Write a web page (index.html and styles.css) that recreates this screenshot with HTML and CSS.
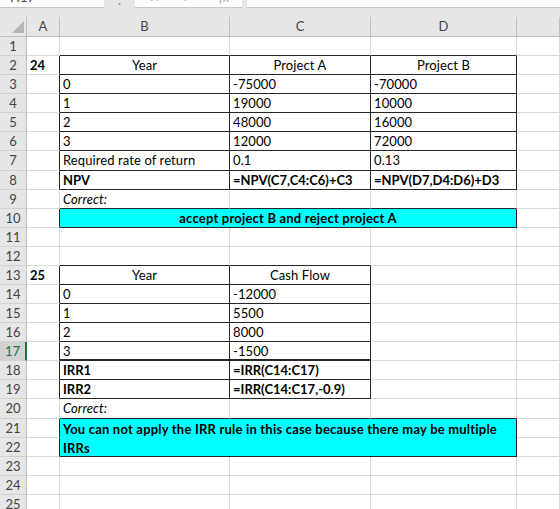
FILE: index.html
```html
<!DOCTYPE html>
<html>
<head>
<meta charset="utf-8">
<link rel="stylesheet" href="styles.css">
</head>
<body>
<div class="topbar">
  <div class="box namebox"><span class="peek">H17</span></div>
  <div class="ddgap"><span class="peek dots">⋮</span></div>
  <div class="box iconbox"><span class="peek ic x1">✕</span><span class="peek ic x2">✓</span><span class="peek ic fxi">fx</span></div>
  <div class="box formula"></div>
</div>
<div class="sheet">
  <div class="hd corner"><svg width="12" height="12" viewBox="0 0 12 12"><polygon points="12,0 12,12 0,12" fill="#b7b7b7"/></svg></div>
  <div class="hd">A</div><div class="hd">B</div><div class="hd">C</div><div class="hd">D</div><div class="hd"></div>

  <div class="rh">1</div><div class="c"></div><div class="c db"></div><div class="c db"></div><div class="c db"></div><div class="c"></div>
  <div class="rh">2</div><div class="c dr b">24</div><div class="c dr db ctr">Year</div><div class="c dr db ctr">Project A</div><div class="c dr db ctr">Project B</div><div class="c"></div>
  <div class="rh">3</div><div class="c dr"></div><div class="c dr db">0</div><div class="c dr db">-75000</div><div class="c dr db">-70000</div><div class="c"></div>
  <div class="rh">4</div><div class="c dr"></div><div class="c dr db">1</div><div class="c dr db">19000</div><div class="c dr db">10000</div><div class="c"></div>
  <div class="rh">5</div><div class="c dr"></div><div class="c dr db">2</div><div class="c dr db">48000</div><div class="c dr db">16000</div><div class="c"></div>
  <div class="rh">6</div><div class="c dr"></div><div class="c dr db">3</div><div class="c dr db">12000</div><div class="c dr db">72000</div><div class="c"></div>
  <div class="rh">7</div><div class="c dr"></div><div class="c dr db">Required rate of return</div><div class="c dr db">0.1</div><div class="c dr db">0.13</div><div class="c"></div>
  <div class="rh">8</div><div class="c dr"></div><div class="c dr db b">NPV</div><div class="c dr db b">=NPV(C7,C4:C6)+C3</div><div class="c dr db b">=NPV(D7,D4:D6)+D3</div><div class="c"></div>
  <div class="rh">9</div><div class="c"></div><div class="c db i">Correct:</div><div class="c db"></div><div class="c db"></div><div class="c"></div>
  <div class="rh">10</div><div class="c dr"></div><div class="c dr db cyan b bl ctr span3">accept project B and reject project A</div><div class="c"></div>
  <div class="rh">11</div><div class="c"></div><div class="c"></div><div class="c"></div><div class="c"></div><div class="c"></div>
  <div class="rh">12</div><div class="c"></div><div class="c db"></div><div class="c db"></div><div class="c"></div><div class="c"></div>
  <div class="rh">13</div><div class="c dr b">25</div><div class="c dr db ctr">Year</div><div class="c dr db ctr">Cash Flow</div><div class="c"></div><div class="c"></div>
  <div class="rh">14</div><div class="c dr"></div><div class="c dr db">0</div><div class="c dr db">-12000</div><div class="c"></div><div class="c"></div>
  <div class="rh">15</div><div class="c dr"></div><div class="c dr db">1</div><div class="c dr db">5500</div><div class="c"></div><div class="c"></div>
  <div class="rh">16</div><div class="c dr"></div><div class="c dr db">2</div><div class="c dr db">8000</div><div class="c"></div><div class="c"></div>
  <div class="rh sel">17</div><div class="c dr"></div><div class="c dr dbt">3</div><div class="c dr dbt">-1500</div><div class="c"></div><div class="c"></div>
  <div class="rh">18</div><div class="c dr"></div><div class="c dr db b">IRR1</div><div class="c dr db b">=IRR(C14:C17)</div><div class="c"></div><div class="c"></div>
  <div class="rh">19</div><div class="c dr"></div><div class="c dr db b">IRR2</div><div class="c dr db b">=IRR(C14:C17,-0.9)</div><div class="c"></div><div class="c"></div>
  <div class="rh">20</div><div class="c"></div><div class="c db i">Correct:</div><div class="c db"></div><div class="c db"></div><div class="c"></div>
  <div class="rh">21</div><div class="c dr"></div><div class="c dr db cyan b bl span3 tall"><span class="nw">You can not apply the IRR rule in this case because there may be multiple</span><br>IRRs</div><div class="c"></div>
  <div class="rh">22</div><div class="c dr"></div><div class="c"></div>
  <div class="rh">23</div><div class="c"></div><div class="c"></div><div class="c"></div><div class="c"></div><div class="c"></div>
  <div class="rh">24</div><div class="c"></div><div class="c"></div><div class="c"></div><div class="c"></div><div class="c"></div>
  <div class="rh">25</div><div class="c"></div><div class="c"></div><div class="c"></div><div class="c"></div><div class="c"></div>
</div>
</body>
</html>
```
FILE: styles.css
```css
html, body {
  margin: 0;
  padding: 0;
  background: #ffffff;
  overflow: hidden;
}
body {
  font-family: Lato, "Liberation Sans", sans-serif;
  font-size: 13px;
  color: #000;
}
.topbar {
  height: 17px;
  background: #e6e6e6;
  display: flex;
  align-items: flex-start;
}
.box {
  height: 8px;
  background: #fff;
  border-bottom: 1px solid #c6c6c6;
  box-sizing: border-box;
  overflow: hidden;
  display: flex;
  align-items: flex-start;
}
.namebox { width: 104px; padding-left: 10px; }
.ddgap { width: 31px; height: 8px; overflow: hidden; display: flex; justify-content: center; align-items: flex-start; }
.iconbox { width: 107px; padding-left: 14px; }
.formula { flex: 1; margin-left: 5px; }
.peek {
  line-height: 13px;
  margin-top: -9px;
  color: #444;
}
.dots { color: #888; margin-top: -8px; }
.ic { color: #a6a6a6; }
.x2 { margin-left: 22px; }
.fxi { font-style: italic; margin-left: 26px; }

.sheet {
  display: grid;
  grid-template-columns: 27px 33px 170px 141px 146px 1fr;
  grid-template-rows: 20px;
  grid-auto-rows: 19.08px;
}
.sheet > div { box-sizing: border-box; }
.hd {
  background: #e6e6e6;
  border-right: 1px solid #bfbfbf;
  border-bottom: 1px solid #bfbfbf;
  color: #444;
  text-align: center;
  line-height: 17px;
  padding-top: 1px;
}
.corner {
  display: flex;
  justify-content: flex-end;
  align-items: flex-end;
  padding: 0 2px 3px 0;
}
.corner svg { display: block; }
.rh {
  background: #e6e6e6;
  border-right: 1px solid #bfbfbf;
  border-bottom: 1px solid #d0d0d0;
  color: #444;
  text-align: center;
  line-height: 17px;
  padding-top: 1px;
}
.rh.sel {
  background: #d2d2d2;
  color: #217346;
  border-right: 2px solid #217346;
}
.c {
  border-right: 1px solid #d9d9d9;
  border-bottom: 1px solid #d9d9d9;
  line-height: 17px;
  padding: 1px 3px 0 3px;
  white-space: nowrap;
  overflow: hidden;
  letter-spacing: 0.1px;
}
.dr { border-right-color: #262626; }
.db { border-bottom-color: #262626; }
.dbt { border-bottom: 2px solid #262626; }
.ctr { text-align: center; }
.b { font-weight: 700; letter-spacing: 0; }
.bl { letter-spacing: 0.2px; }
.i { font-style: italic; }
.cyan { background: #00ffff; }
.span3 { grid-column: span 3; }
.tall {
  grid-row: span 2;
  line-height: 19.08px;
  white-space: normal;
}
.nw { white-space: nowrap; }
```
